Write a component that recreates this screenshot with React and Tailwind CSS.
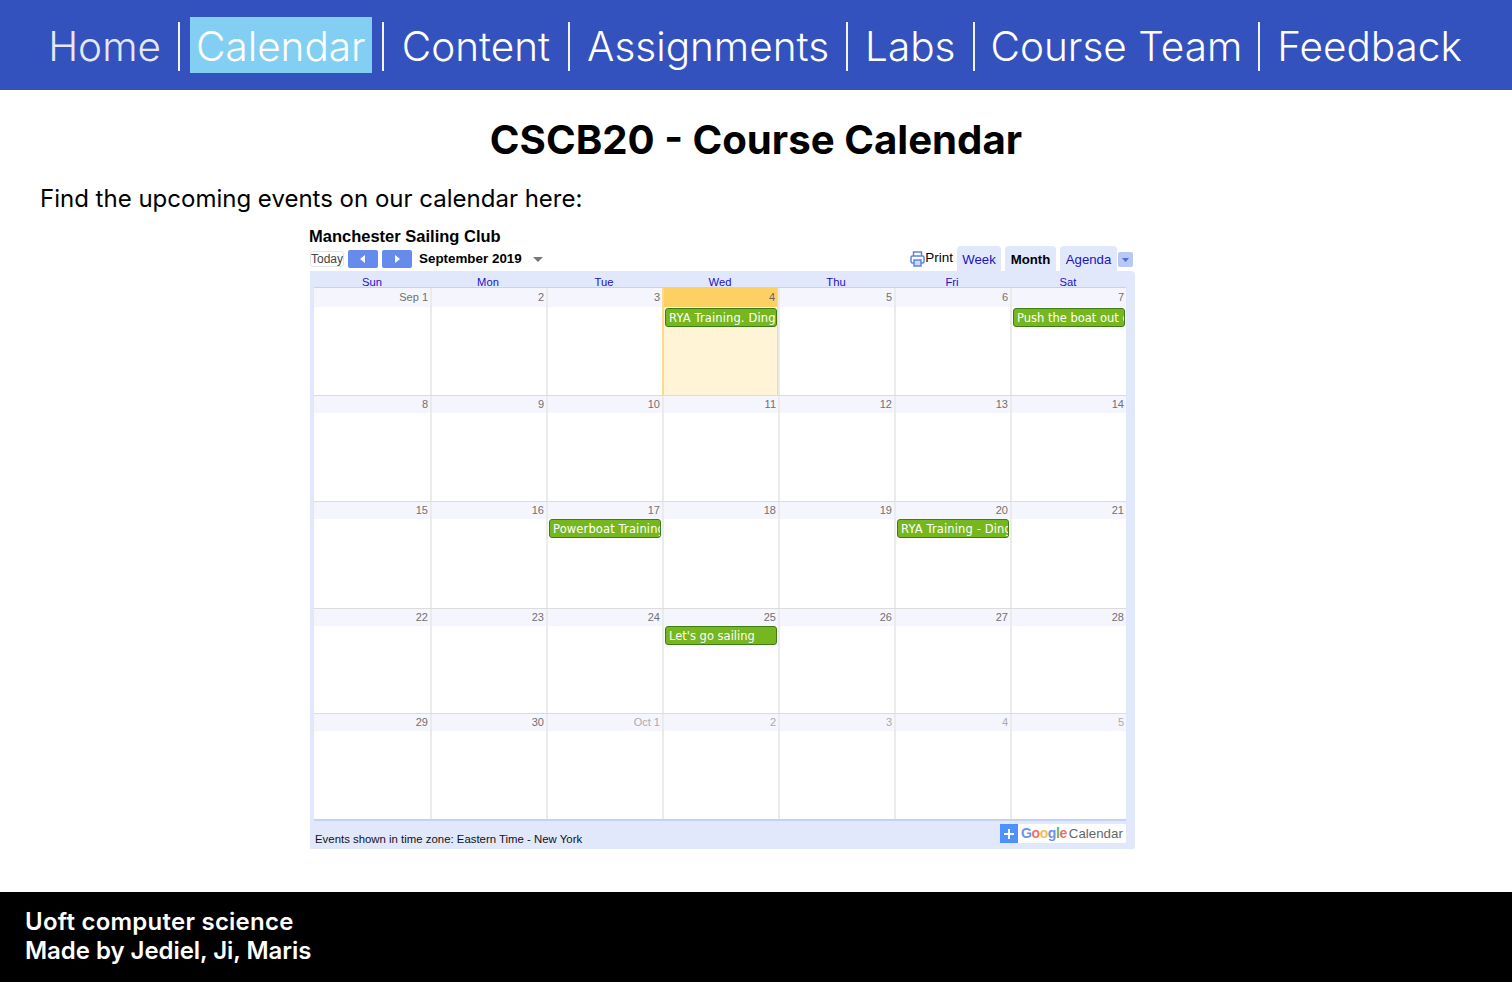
const NAV = [
  ["Home", "px-[7px] text-[#e4e7f6]"],
  ["Calendar", "px-[6px] bg-[#82cff3]"],
  ["Content", "px-[8px]"],
  ["Assignments", "px-[7px]"],
  ["Labs", "px-[7px]"],
  ["Course Team", "px-[6px]"],
  ["Feedback", "px-[7px]"],
];
const ROWS = [
  [["Sep 1"], ["2"], ["3"], ["4", "RYA Training. Ding", "today"], ["5"], ["6"], ["7", "Push the boat out on", null, true]],
  [["8"], ["9"], ["10"], ["11"], ["12"], ["13"], ["14"]],
  [["15"], ["16"], ["17", "Powerboat Training"], ["18"], ["19"], ["20", "RYA Training - Dinghy"], ["21"]],
  [["22"], ["23"], ["24"], ["25", "Let's go sailing", null, true], ["26"], ["27"], ["28"]],
  [["29"], ["30"], ["Oct 1", null, "other"], ["2", null, "other"], ["3", null, "other"], ["4", null, "other"], ["5", null, "other"]],
];
const ROW_H = ["h-[107px]", "h-[106px]", "h-[107px]", "h-[105px]", "h-[106px]"];
const DAYS = ["Sun", "Mon", "Tue", "Wed", "Thu", "Fri", "Sat"];

function Cell({ cell, first, top }) {
  const [label, event, kind, narrow] = cell;
  const today = kind === "today";
  const other = kind === "other";
  return (
    <div className={`min-w-0 overflow-hidden flex flex-col ${first ? "" : today ? "border-l-2 border-[#fdd98a]" : "border-l-2 border-[#ebebeb]"} ${today ? "bg-[#fff4d6] border-r border-r-[#fdd98a]" : "bg-white"}`}>
      <div className={`shrink-0 pr-[2px] text-right text-[11px] ${top ? "h-[19px] leading-[19px]" : "h-[17px] leading-[16px]"} ${today ? "bg-[#fdd063] text-[#666]" : "bg-[#f5f6fd]"} ${other ? "text-[#aaa]" : today ? "" : "text-[#707070]"}`}>
        {label}
      </div>
      {event && (
        <div className={`h-[19px] overflow-hidden whitespace-nowrap rounded-[3px] border border-[#3d7d18] bg-[#76b71f] pl-[3px] text-[11.5px] leading-[18px] text-white [font-family:'DejaVu_Sans',sans-serif] ${top ? "mt-[1px]" : ""} ${today ? "ml-px" : "mx-px"} ${narrow ? "tracking-normal" : "tracking-[0.13px]"}`}>
          {event}
        </div>
      )}
    </div>
  );
}

function CalendarWidget() {
  return (
    <div className="ml-[309px] mt-[13px] w-[826px] [font-family:'Liberation_Sans',Arial,sans-serif]">
      <div className="h-[21px] text-[16.5px] font-bold leading-[21px] text-black">Manchester Sailing Club</div>
      <div className="flex h-[24px]">
        <div className="flex h-[24px] items-center pl-[1px]">
          <div className="w-[34px] rounded-[3px] border border-[#e4e4e4] text-center text-[12px] leading-[14px] text-[#444]">Today</div>
          <div className="ml-[4px] flex h-[18px] w-[30px] items-center justify-center rounded-[2px] bg-[#668bec]">
            <svg width="6" height="8" viewBox="0 0 6 8"><path d="M5 0v8L0 4z" fill="#fff" /></svg>
          </div>
          <div className="ml-[4px] flex h-[18px] w-[30px] items-center justify-center rounded-[2px] bg-[#668bec]">
            <svg width="6" height="8" viewBox="0 0 6 8"><path d="M1 0v8l5-4z" fill="#fff" /></svg>
          </div>
          <div className="ml-[7px] text-[13.4px] font-bold leading-[16px] text-black">September 2019</div>
          <svg className="ml-[11px]" width="10" height="5" viewBox="0 0 10 5"><path d="M0 0h10L5 5z" fill="#777" /></svg>
        </div>
        <div className="ml-auto flex h-[25px] items-end self-end pr-[2px]">
          <svg className="mb-[4px]" width="15" height="16" viewBox="0 0 15 16" fill="none" stroke="#5c82e8" strokeWidth="1.5">
            <path d="M3.5 5V1h8v4" /><rect x="1" y="5" width="13" height="7" rx="1.5" /><rect x="4" y="9" width="7" height="6" fill="#cdd9f7" />
          </svg>
          <div className="mb-[5px] text-[13.5px] leading-[16px] text-black">Print</div>
          <div className="ml-[4px] flex h-[25px] w-[44px] items-center justify-center rounded-t-[4px] bg-[#e2e8fc] pt-[3px] text-[13.2px] text-[#2010c8]">Week</div>
          <div className="ml-[4px] flex h-[25px] w-[51px] items-center justify-center rounded-t-[4px] bg-[#e2e8fc] pt-[3px] text-[13.2px] font-bold text-black">Month</div>
          <div className="ml-[4px] flex h-[25px] w-[57px] items-center justify-center rounded-t-[4px] bg-[#e2e8fc] pt-[3px] text-[13.2px] text-[#2010c8]">Agenda</div>
          <div className="mb-[4px] ml-[1px] flex h-[15px] w-[15px] items-center justify-center rounded-[2px] bg-[#b8c8f3]">
            <svg width="7" height="4" viewBox="0 0 7 4"><path d="M0 0h7L3.5 4z" fill="#4a6fdc" /></svg>
          </div>
        </div>
      </div>
      <div className="ml-[1px] w-[825px] rounded-tr-[4px] rounded-br-[2px] bg-[#e2e8fc] px-[4px]">
        <div className="grid h-[17px] w-[812px] grid-cols-7 border-b border-[#c4d2fa] text-center text-[11.2px] leading-[22px] text-[#2010c8]">
          {DAYS.map((d) => (
            <div key={d} className="h-[16px]">{d}</div>
          ))}
        </div>
        <div className="w-[812px] border-b-2 border-[#c4d2fa]">
          {ROWS.map((row, r) => (
            <div key={r} className={`grid grid-cols-7 ${ROW_H[r]} ${r ? "border-t border-[#dcdcdc]" : ""}`}>
              {row.map((c, i) => <Cell key={i} cell={c} first={i === 0} top={r === 0} />)}
            </div>
          ))}
        </div>
        <div className="flex h-[28px] items-start justify-between">
          <div className="ml-px mt-[11px] text-[11.4px] leading-[14px] text-[#111]">Events shown in time zone: Eastern Time - New York</div>
          <div className="mr-[5px] mt-[3px] flex h-[19px] w-[126px] items-center bg-white">
            <div className="flex h-[19px] w-[18px] items-center justify-center bg-[#4d90fe] text-white">
              <svg width="12" height="12" viewBox="0 0 12 12"><path d="M6 1v10M1 6h10" stroke="#fff" strokeWidth="2" /></svg>
            </div>
            <div className="ml-[3px] text-[14px] font-bold leading-[19px] tracking-[-0.4px]">
              <span className="text-[#6b93ec]">G</span><span className="text-[#ec7166]">o</span><span className="text-[#f3c14a]">o</span><span className="text-[#6b93ec]">g</span><span className="text-[#69b56e]">l</span><span className="text-[#ec7166]">e</span>
            </div>
            <div className="ml-[2px] text-[13.3px] leading-[19px] text-[#666]">Calendar</div>
          </div>
        </div>
      </div>
    </div>
  );
}

export default function App() {
  return (
    <div className="flex h-[982px] flex-col overflow-hidden bg-white font-['Inter',sans-serif] text-black">
      <nav className="flex h-[90px] shrink-0 items-center justify-center bg-[#3452bd] pr-[2px] text-[40.5px] font-light leading-[60px] text-white">
        {NAV.map(([n, cls], i) => (
          <div key={n} className="flex items-center">
            {i > 0 && <div className="mx-[10px] mt-[3px] h-[49px] w-[2px] bg-[#f2f4fb]" />}
            <span className={`block h-[56px] ${cls}`}>{n}</span>
          </div>
        ))}
      </nav>
      <main className="min-h-0 flex-1">
        <h1 className="mt-[25px] h-[50px] text-center text-[40.2px] font-bold leading-[50px]">CSCB20 - Course Calendar</h1>
        <p className="ml-[40px] mt-[19px] text-[24px] leading-[29px]">Find the upcoming events on our calendar here:</p>
        <CalendarWidget />
      </main>
      <footer className="h-[90px] shrink-0 bg-black pl-[25px] pt-[15px] text-[24px] font-semibold leading-[29px] text-white">
        <div className="tracking-[0.24px]">Uoft computer science</div>
        <div className="tracking-[-0.04px]">Made by Jediel, Ji, Maris</div>
      </footer>
    </div>
  );
}
